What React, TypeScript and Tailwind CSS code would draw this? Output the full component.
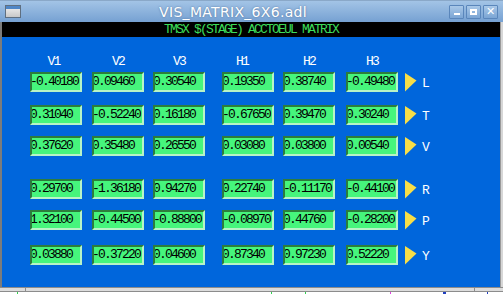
const rows: { label: string; values: string[]; mt: string }[] = [
  { label: 'L', values: ['-0.40180', '0.09460', '0.30540', '0.19350', '0.38740', '-0.49480'], mt: 'mt-[3px]' },
  { label: 'T', values: ['0.31040', '-0.52240', '0.16180', '-0.67650', '0.39470', '0.30240'], mt: 'mt-[13px]' },
  { label: 'V', values: ['0.37620', '0.35480', '0.26550', '0.03080', '0.03800', '0.00540'], mt: 'mt-[11px]' },
  { label: 'R', values: ['0.29700', '-1.36180', '0.94270', '0.22740', '-0.11170', '-0.44100'], mt: 'mt-[23px]' },
  { label: 'P', values: ['1.32100', '-0.44500', '-0.88800', '-0.08970', '0.44760', '-0.28200'], mt: 'mt-[11px]' },
  { label: 'Y', values: ['0.03880', '-0.37220', '0.04600', '0.87340', '0.97230', '0.52220'], mt: 'mt-[15px]' },
];

// left margin of each column (first one is the container padding)
const colGap = ['ml-0', 'ml-[10px]', 'ml-[9px]', 'ml-[17px]', 'ml-[9px]', 'ml-[11px]'];
const headers = [
  { text: 'V1', pad: 'pr-[5px]' },
  { text: 'V2', pad: 'pr-0' },
  { text: 'V3', pad: 'pr-0' },
  { text: 'H1', pad: 'pr-[12px]' },
  { text: 'H2', pad: 'pr-0' },
  { text: 'H3', pad: 'pr-0' },
];

const mono = "font-['Liberation_Mono',monospace] text-[13px] tracking-[-1.8px]";

const Field = ({ value, gap }: { value: string; gap: string }) => (
  <div
    className={`${gap} w-[52px] h-[20px] bg-[#46f57c] border-2 border-t-[#2c7c3c] border-l-[#2c7c3c] border-b-[#b8f3c6] border-r-[#b8f3c6] flex items-center overflow-hidden`}
  >
    <span className={`${mono} text-black leading-[16px] -ml-[2px]`}>{value}</span>
  </div>
);

const Arrow = () => (
  <svg width="12" height="19" viewBox="0 0 12 19" className="ml-[7px]">
    <polygon points="0,0 11.5,7.5 0,18.5" fill="#f8de48" />
  </svg>
);

const TitleButton = ({ children }: { children: React.ReactNode }) => (
  <div className="w-[15px] h-[14px] rounded-[1px] border border-[#5a86bb] bg-gradient-to-b from-[#a9c8e8] to-[#7ba5d4] flex items-center justify-center">
    {children}
  </div>
);

export default function App() {
  return (
    <div className="w-[503px] h-[294px] bg-white flex flex-col overflow-hidden">
      {/* title bar */}
      <div className="h-[22px] shrink-0 relative flex items-center border-t border-[#8aa8c8] bg-gradient-to-b from-[#a3c4e6] to-[#76a1d2]">
        <div className="ml-[5px] w-[16px] h-[13px] border border-[#5f6f80] bg-gradient-to-b from-[#f2f2f2] to-[#c8c8c8] flex flex-col">
          <div className="h-[3px] bg-[#4f86c6]" />
        </div>
        <div className="flex-1 text-center text-white font-['DejaVu_Sans',sans-serif] text-[14px] leading-[20px] tracking-[0.3px] [text-shadow:0_0_2px_rgba(40,70,110,0.6)] -ml-[4px]">
          VIS_MATRIX_6X6.adl
        </div>
        <div className="flex gap-[2px] mr-[5px]">
          <TitleButton>
            <div className="w-[6px] h-[2px] bg-white mt-[5px]" />
          </TitleButton>
          <TitleButton>
            <div className="w-[7px] h-[6px] border-2 border-white" />
          </TitleButton>
          <TitleButton>
            <span className="text-white text-[11px] leading-[11px] font-bold font-['DejaVu_Sans',sans-serif]">✕</span>
          </TitleButton>
        </div>
      </div>

      {/* window body */}
      <div className="flex h-[265px] shrink-0">
        <div className="w-[2px] bg-[#7c7c7c]" />
        <div className="w-[498px] flex flex-col">
          <div className={`h-[15px] bg-black text-center text-[#3ddc5a] ${mono} leading-[15px]`}>
            TMSX $(STAGE) ACCTOEUL MATRIX
          </div>
          <div className="flex-1 bg-[#0066dc] pl-[28px] flex flex-col">
            <div className="flex mt-[18px] h-[14px]">
              {headers.map((h, i) => (
                <div
                  key={h.text}
                  className={`${colGap[i]} w-[52px] ${h.pad} text-center text-white ${mono} leading-[14px]`}
                >
                  {h.text}
                </div>
              ))}
            </div>
            {rows.map((r) => (
              <div key={r.label} className={`flex items-center ${r.mt} h-[20px]`}>
                {r.values.map((v, i) => (
                  <Field key={i} value={v} gap={colGap[i]} />
                ))}
                <Arrow />
                <span className={`ml-[5px] text-white ${mono} leading-[14px] mt-[3px]`}>{r.label}</span>
              </div>
            ))}
          </div>
        </div>
        <div className="w-[3px] bg-[#d6d6d6] border-l border-[#9a9a9a]" />
      </div>

      {/* bottom frame */}
      <div className="h-[5px] shrink-0 flex bg-[#dcdcdc] border-y border-[#8c8c8c]">
        <div className="w-[26px] border-r border-[#8c8c8c]" />
        <div className="w-[449px] border-r border-[#8c8c8c]" />
        <div className="flex-1" />
      </div>
      <div className="flex-1 relative">
        <div className="absolute left-[17px] top-0 w-px h-full bg-[#30d050]" />
        <div className="absolute left-[271px] top-0 w-px h-full bg-[#30d050]" />
        <div className="absolute left-[305px] top-0 w-px h-full bg-[#30d050]" />
        <div className="absolute left-[390px] top-0 w-px h-full bg-[#e040e0]" />
        <div className="absolute left-[443px] top-0 w-[3px] h-full bg-[#2040c0]" />
        <div className="absolute left-[487px] top-0 w-px h-full bg-[#2040c0]" />
      </div>
    </div>
  );
}
